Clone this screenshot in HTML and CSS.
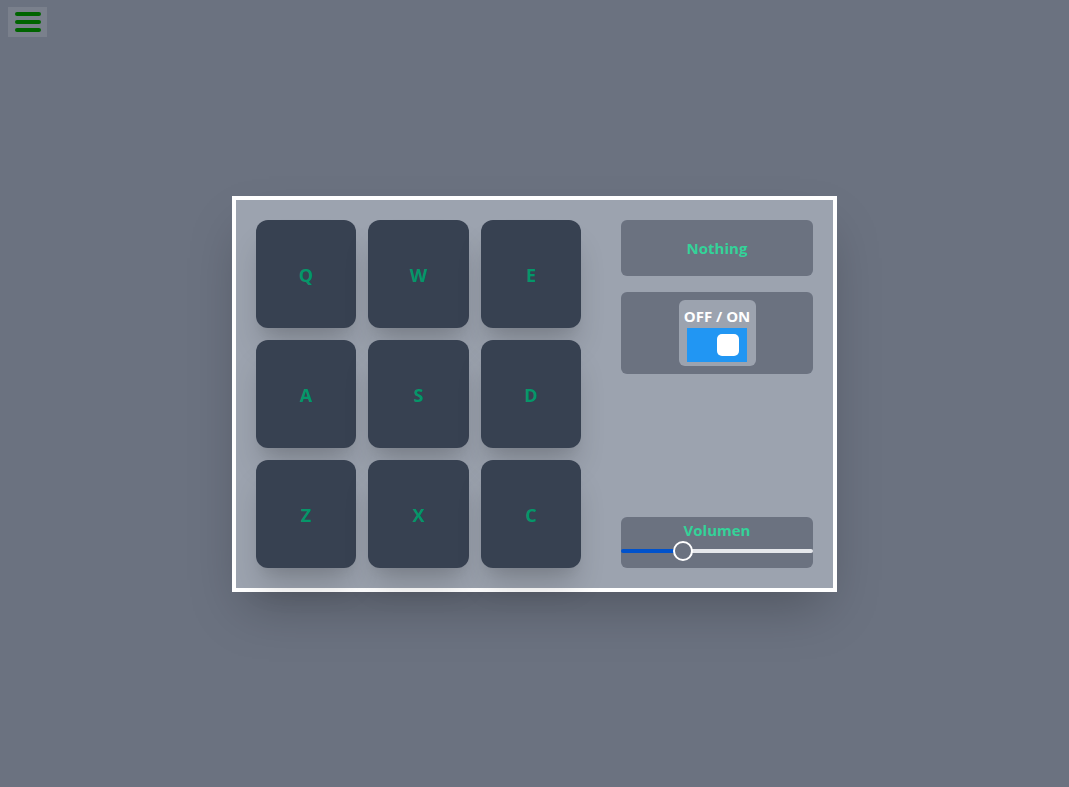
FILE: index.html
```html
<!DOCTYPE html>
<html lang="es">
<head>
    <meta charset="UTF-8">
    <meta name="viewport" content="width=device-width, initial-scale=1.0">
    <title>Drum Machine</title>
    <link rel="stylesheet" href="styles.css">
</head>
<body>
    <button class="menu-btn" type="button" aria-label="Menu">
        <span></span>
        <span></span>
        <span></span>
    </button>

    <div class="page">
        <div class="machine" id="drum-machine">
            <div class="pads">
                <div class="pad">Q</div>
                <div class="pad">W</div>
                <div class="pad">E</div>
                <div class="pad">A</div>
                <div class="pad">S</div>
                <div class="pad">D</div>
                <div class="pad">Z</div>
                <div class="pad">X</div>
                <div class="pad">C</div>
            </div>
            <div class="controls">
                <div class="display" id="display">Nothing</div>
                <div class="power">
                    <div class="switch-box">
                        <div class="switch-label">OFF / ON</div>
                        <div class="switch">
                            <div class="knob"></div>
                        </div>
                    </div>
                </div>
                <div class="volume">
                    <div class="volume-label">Volumen</div>
                    <input type="range" class="slider" min="0" max="100" value="30">
                </div>
            </div>
        </div>
    </div>
</body>
</html>
```

FILE: styles.css
```css
* {
    box-sizing: border-box;
}
body {
    margin: 0;
    background: #6b7280;
    font-family: "Open Sans", "Noto Sans", sans-serif;
}
.menu-btn {
    position: absolute;
    top: 7px;
    left: 8px;
    width: 39px;
    height: 30px;
    padding: 0;
    border: none;
    background: #7a808c;
    display: flex;
    flex-direction: column;
    align-items: center;
    justify-content: center;
    gap: 4px;
}
.menu-btn span {
    display: block;
    width: 26px;
    height: 4px;
    border-radius: 2px;
    background: #006400;
}
.page {
    height: 787px;
    display: flex;
    align-items: center;
    justify-content: center;
}
.machine {
    width: 605px;
    height: 396px;
    border: 4px solid #fff;
    background: #9ca3af;
    padding: 20px;
    display: flex;
    justify-content: space-between;
    box-shadow: 0 25px 50px -12px rgba(0, 0, 0, 0.25);
}
.pads {
    width: 325px;
    display: grid;
    grid-template-columns: 100px 101px 100px;
    grid-template-rows: 108px 108px 108px;
    column-gap: 12px;
    row-gap: 12px;
}
.pad {
    background: #374151;
    border-radius: 12px;
    color: #059669;
    font-weight: 700;
    font-size: 18px;
    padding-top: 2px;
    display: flex;
    align-items: center;
    justify-content: center;
    box-shadow: 0 22px 30px -6px rgba(0, 0, 0, 0.18), 0 10px 12px -6px rgba(0, 0, 0, 0.06);
}
.controls {
    width: 192px;
    display: flex;
    flex-direction: column;
}
.display {
    height: 56px;
    background: #6b7280;
    border-radius: 6px;
    color: #34d399;
    font-weight: 700;
    font-size: 15px;
    display: flex;
    align-items: center;
    justify-content: center;
}
.power {
    margin-top: 16px;
    height: 82px;
    background: #6b7280;
    border-radius: 6px;
    display: flex;
    justify-content: center;
    padding-top: 8px;
}
.switch-box {
    width: 77px;
    height: 66px;
    background: #9ca3af;
    border-radius: 6px;
    display: flex;
    flex-direction: column;
    align-items: center;
}
.switch-label {
    color: #fff;
    font-weight: 700;
    font-size: 15px;
    line-height: 18px;
    margin-top: 7px;
    white-space: nowrap;
}
.switch {
    margin-top: 3px;
    width: 60px;
    height: 34px;
    background: #2196f3;
    position: relative;
}
.knob {
    position: absolute;
    top: 6px;
    right: 8px;
    width: 22px;
    height: 22px;
    border-radius: 5px;
    background: #fff;
}
.volume {
    margin-top: auto;
    height: 51px;
    background: #6b7280;
    border-radius: 6px;
    display: flex;
    flex-direction: column;
    align-items: center;
}
.volume-label {
    color: #34d399;
    font-weight: 700;
    font-size: 15px;
    line-height: 20px;
    margin-top: 3px;
}
.slider {
    -webkit-appearance: none;
    appearance: none;
    width: 100%;
    height: 4px;
    margin: 9px 0 0;
    border-radius: 2px;
    background: linear-gradient(to right, #0052cc 0, #0052cc 30%, #e5e7eb 30%, #e5e7eb 100%);
    outline: none;
}
.slider::-webkit-slider-thumb {
    -webkit-appearance: none;
    appearance: none;
    width: 20px;
    height: 20px;
    border-radius: 50%;
    background: #6b7280;
    border: 2px solid #fff;
}
```
